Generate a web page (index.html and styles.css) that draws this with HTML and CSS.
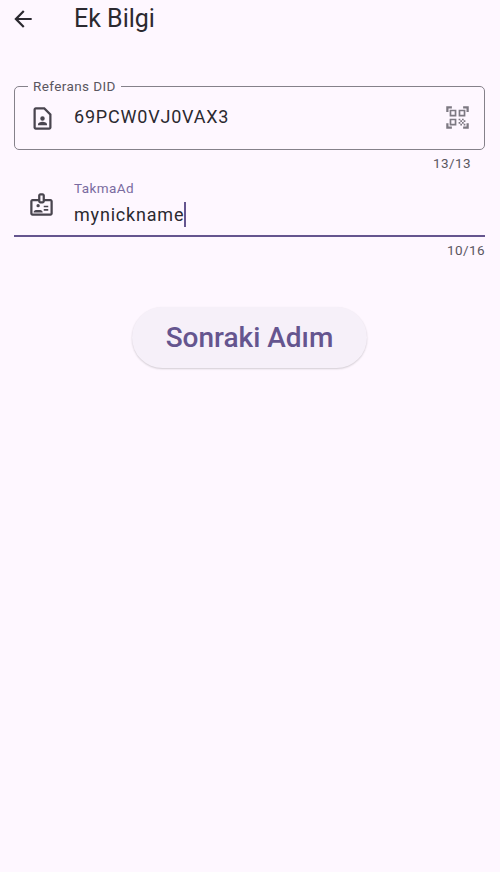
FILE: index.html
```html
<!DOCTYPE html>
<html lang="tr">
<head>
<meta charset="utf-8">
<title>Ek Bilgi</title>
<link rel="stylesheet" href="styles.css">
</head>
<body>
<header class="appbar">
  <svg class="back" viewBox="0 0 24 24" width="26" height="26"><path d="M20 11H7.83l5.59-5.59L12 4l-8 8 8 8 1.41-1.41L7.83 13H20z"/></svg>
  <h1 class="title">Ek Bilgi</h1>
</header>
<main class="form">
  <div class="outlined">
    <span class="float-label">Referans DID</span>
    <svg class="icon" viewBox="0 0 24 24" width="27" height="27"><path d="M14 2H6c-1.100 0-2 .9-2 2v16c0 1.100.9 2 2 2h12c1.100 0 2-.9 2-2V8zm4 18H6V4h7.170L18 8.830zM12 14a2 2 0 1 0 0-4 2 2 0 0 0 0 4zm4 3.430c0-.810-.480-1.530-1.220-1.850a6.950 6.950 0 0 0-5.560 0A2.010 2.010 0 0 0 8 17.430V18h8z"/></svg>
    <span class="value did">69PCW0VJ0VAX3</span>
    <svg class="qr" viewBox="0 0 24 24" width="27" height="27"><path d="M9.500 6.500v3h-3v-3zM11 5H5v6h6zm-1.500 9.500v3h-3v-3zM11 13H5v6h6zm6.500-6.500v3h-3v-3zM19 5h-6v6h6zm-6 8h1.500v1.500H13zm1.500 1.500H16V16h-1.500zM16 13h1.500v1.500H16zm-3 3h1.500v1.500H13zm1.500 1.500H16V19h-1.500zM16 16h1.500v1.500H16zm1.500-1.500H19V16h-1.500zm0 3H19V19h-1.500zM22 7h-2V4h-3V2h5zm0 15v-5h-2v3h-3v2zM2 22h5v-2H4v-3H2zM2 2v5h2V4h3V2z"/></svg>
  </div>
  <div class="counter inset">13/13</div>
  <div class="underlined">
    <svg class="icon" viewBox="0 0 24 24" width="27" height="27"><path d="M20 7h-5V4c0-1.100-.9-2-2-2h-2c-1.100 0-2 .9-2 2v3H4c-1.100 0-2 .9-2 2v11c0 1.100.9 2 2 2h16c1.100 0 2-.9 2-2V9c0-1.100-.9-2-2-2zM11 4h2v5h-2zm9 16H4V9h5c0 1.100.9 2 2 2h2c1.100 0 2-.9 2-2h5zm-11-5.500a1.500 1.500 0 1 0 0-3 1.500 1.500 0 0 0 0 3zM12.080 17.300c-.640-.280-1.340-.430-2.080-.430H8c-.740 0-1.440.150-2.080.430-.560.240-.920.780-.920 1.390V19h8v-.310c0-.610-.360-1.150-.920-1.390zM14 13h4v1.500h-4zm0 3h4v1.500h-4z"/></svg>
    <div class="field-body">
      <span class="small-label">TakmaAd</span>
      <span class="value">mynickname<span class="caret"></span></span>
    </div>
  </div>
  <div class="counter">10/16</div>
  <div class="actions">
    <button class="next" type="button">Sonraki Adım</button>
  </div>
</main>
</body>
</html>
```
FILE: styles.css
```css
* { box-sizing: border-box; }
html, body { margin: 0; height: 100%; }
body {
  background: #fef7ff;
  color: #1d1b20;
  font-family: Roboto, "Liberation Sans", sans-serif;
  overflow: hidden;
}
.appbar {
  display: flex;
  align-items: center;
  height: 38px;
  padding-left: 10px;
  gap: 38px;
}
.back { fill: #2b2930; flex: none; }
.title {
  margin: 0;
  font-size: 25px;
  line-height: 38px;
  font-weight: 400;
  color: #2b2930;
}
.form {
  display: flex;
  flex-direction: column;
  padding: 48px 15px 0 14px;
}
.outlined {
  position: relative;
  display: flex;
  align-items: center;
  height: 64px;
  padding: 0 13px 0 14px;
  border: 1.5px solid #85818a;
  border-radius: 5px;
}
.float-label {
  position: absolute;
  top: -9px;
  left: 13px;
  padding: 0 5px;
  background: #fef7ff;
  color: #5a5660;
  font-size: 13.5px;
  line-height: 16px;
  letter-spacing: 0.4px;
}
.icon { fill: #49454f; flex: none; }
.value {
  font-size: 18px;
  line-height: 24px;
  letter-spacing: 0.8px;
  color: #2b2930;
}
.did {
  flex: 1;
  margin-left: 18px;
  margin-top: -2px;
}
.qr { fill: #7d7982; flex: none; margin-top: -1px; }
.counter {
  padding-top: 5px;
  height: 25px;
  font-size: 13.5px;
  line-height: 16px;
  letter-spacing: 0.4px;
  color: #5a5660;
  text-align: right;
}
.inset { padding-right: 14px; }
.underlined {
  display: flex;
  align-items: flex-start;
  height: 62px;
  border-bottom: 2px solid #65558f;
  padding-left: 14px;
}
.underlined .icon { margin-top: 16px; }
.field-body {
  display: flex;
  flex-direction: column;
  margin-left: 19px;
  margin-top: 5px;
}
.small-label {
  font-size: 13.5px;
  line-height: 16px;
  letter-spacing: 0.4px;
  color: #7a6ba0;
}
.small-label + .value { margin-top: 6px; }
.caret {
  display: inline-block;
  width: 2px;
  height: 25px;
  margin-bottom: -6px;
  background: #65558f;
}
.actions {
  display: flex;
  justify-content: center;
  padding-top: 45px;
}
.next {
  width: 235px;
  height: 61px;
  padding: 0;
  border: 0;
  border-radius: 31px;
  background: #f6f0f9;
  color: #65558f;
  font-family: inherit;
  font-size: 28px;
  font-weight: 500;
  box-shadow: 0 1px 2px rgba(0, 0, 0, 0.18);
}
```
